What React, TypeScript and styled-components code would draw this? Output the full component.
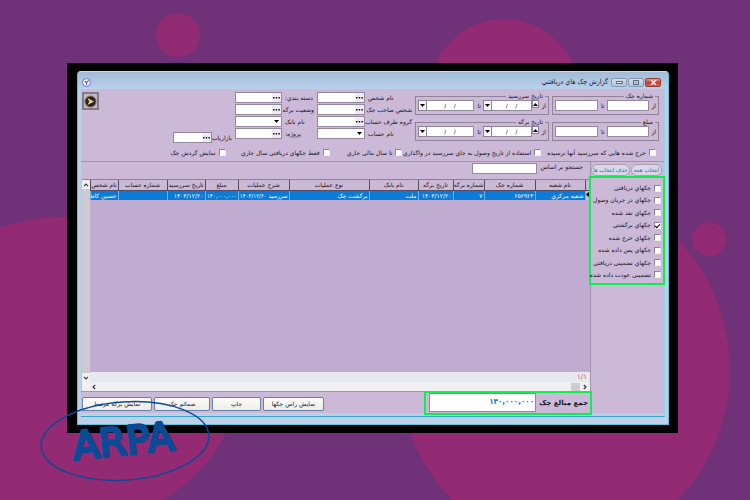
import React, { useId } from "react";
import styled, { createGlobalStyle } from "styled-components";

const Global = createGlobalStyle`
  *, *::before, *::after { box-sizing: border-box; }
  html, body { margin: 0; background: #6f3178; }
  body, button, input, select, table {
    font-family: "DejaVu Sans", "Noto Sans", sans-serif;
    font-size: 6px;
    line-height: 10px;
    color: #17121c;
  }
`;

const Page = styled.main`
  position: relative;
  display: flex;
  min-height: 100vh;
  padding: 63px 72px 67px 67px;
  overflow: hidden;
`;
const Backdrop = styled.svg`
  position: absolute;
  inset: 0;
  width: 100%;
  height: 100%;
`;
const Frame = styled.div`
  position: relative;
  display: flex;
  flex: 1;
  min-width: 0;
  padding: 8px 9px 8px 10px;
  background: #000;
`;
const Window = styled.section`
  display: flex;
  flex: 1;
  flex-direction: column;
  min-width: 0;
  border: 1px solid #5fc3dc;
  border-top-color: #c5dcea;
  border-radius: 4px 4px 0 0;
  background: #bdd0e8;
`;
const TitleBar = styled.header`
  display: flex;
  align-items: center;
  height: 17px;
  padding: 3px 7px 0 4px;
  background: linear-gradient(#a3bcd6, #b9d1ec);
  border-radius: 4px 4px 0 0;
`;
const TitleText = styled.h1`
  flex: 1;
  margin: 0 2px;
  font-family: "DejaVu Sans Condensed", "DejaVu Sans", sans-serif;
  font-size: 7px;
  font-weight: 400;
  line-height: 12px;
`;
const Caption = styled.button<{ $close?: boolean }>`
  display: grid;
  place-items: center;
  width: 16px;
  height: 9px;
  margin-left: 1px;
  padding: 0;
  color: ${(p) => (p.$close ? "#fff" : "#51647c")};
  background: ${(p) => (p.$close ? "linear-gradient(#e39a8c, #c6402f 50%, #d8634a)" : "linear-gradient(#d3e0ee, #b1c6de)")};
  border: 1px solid ${(p) => (p.$close ? "#9a3b34" : "#8799b0")};
  border-radius: 2px;
`;
const Inner = styled.div`
  display: flex;
  flex: 1;
  flex-direction: column;
  min-width: 0;
  margin: 0 3px 7px;
  padding-bottom: 3px;
  border-bottom: 1px solid #3aa5c6;
  border-right: 1px solid #8fd8e8;
`;
const Client = styled.div`
  display: flex;
  flex: 1;
  flex-direction: column;
  min-width: 0;
  background: #ccb9d8;
`;
const Filters = styled.div`
  display: grid;
  grid-template-columns: 107fr 134fr 95fr 79fr 59fr 88fr;
  gap: 3px;
  padding: 1px 5px 0 1px;
  height: 56px;
  & > * { min-width: 0; }
`;
const Stack = styled.div<{ $gap: number; $end?: boolean }>`
  display: flex;
  flex-direction: column;
  gap: ${(p) => p.$gap}px;
  justify-content: ${(p) => (p.$end ? "flex-end" : "flex-start")};
  padding: 2px 0;
`;
const Group = styled.fieldset`
  display: flex;
  align-items: center;
  gap: 2px;
  height: 23px;
  min-width: 0;
  margin: 0;
  padding: 0 2px 1px;
  border: 1px solid #8f8398;
`;
const Legend = styled.legend`
  margin-right: 1px;
  padding: 0 2px;
  line-height: 8px;
`;
const RangeLabel = styled.label`
  flex: none;
  width: 5px;
`;
const TextBox = styled.input`
  flex: 1;
  min-width: 0;
  width: 100%;
  height: 11px;
  padding: 0 2px;
  background: #fff;
  border: 1px solid #94899c;
  outline: 0;
`;
const DateBox = styled(TextBox)`
  text-align: center;
  border-left: 0;
  white-space: pre;
`;
const MiniButton = styled.button`
  display: grid;
  flex: none;
  place-items: center;
  width: 9px;
  height: 11px;
  padding: 0;
  color: #000;
  background: #f6f4f7;
  border: 1px solid #8c8295;
`;
const SpinButton = styled(MiniButton)`
  width: 7px;
  height: 8px;
`;
const DateField = styled.div`
  display: flex;
  flex: 1;
  min-width: 0;
`;
const FieldRow = styled.div<{ $label: number }>`
  display: grid;
  grid-template-columns: ${(p) => p.$label}px minmax(0, 1fr);
  gap: 3px;
  align-items: center;
  height: 11px;
  white-space: nowrap;
`;
const FieldLabel = styled.label`
  text-align: left;
`;
const Combo = styled.div`
  position: relative;
  display: flex;
  height: 11px;
  background: #fff;
  border: 1px solid #94899c;
`;
const ComboInput = styled.input`
  flex: 1;
  min-width: 0;
  height: 9px;
  padding: 0 2px;
  border: 0;
  outline: 0;
`;
const Ellipsis = styled.button`
  display: grid;
  flex: none;
  place-items: center;
  width: 9px;
  height: 9px;
  padding: 0;
  border: 0;
  background: #efecf1;
`;
const ComboSelect = styled.select`
  width: 100%;
  height: 9px;
  padding: 0;
  border: 0;
  background: transparent;
  appearance: none;
`;
const SelectArrow = styled.svg`
  position: absolute;
  top: 3px;
  right: 2px;
  pointer-events: none;
`;
const RunButton = styled.button`
  display: grid;
  place-items: center;
  width: 17px;
  height: 18px;
  margin: 2px auto 0 0;
  padding: 0;
  background: #c4b9c6;
  border: 2px solid #827b88;
`;
const Toggles = styled.div`
  display: grid;
  grid-template-columns: 115fr 139fr 73fr 104fr 145fr;
  align-items: center;
  height: 17px;
  padding: 0 8px 1px 0;
  border-bottom: 1px solid #a094aa;
`;
const CheckLabel = styled.label`
  display: flex;
  align-items: center;
  gap: 3px;
  min-width: 0;
  white-space: nowrap;
`;
const CheckBox = styled.input`
  flex: none;
  display: grid;
  place-items: center;
  width: 7px;
  height: 7px;
  margin: 0;
  appearance: none;
  background: #fff;
  border: 1px solid #8d8396;
  border-right-color: #eee;
  border-bottom-color: #eee;
  &:checked::after {
    content: "";
    width: 5px;
    height: 3px;
    border-left: 1px solid #000;
    border-bottom: 1px solid #000;
    transform: rotate(-45deg);
  }
`;
const Workspace = styled.div`
  display: flex;
  flex: 1;
  min-height: 0;
`;
const Sidebar = styled.aside`
  width: 74px;
  flex: none;
  padding-top: 2px;
  border-left: 1px solid #a094aa;
`;
const PillRow = styled.div`
  display: flex;
  gap: 1px;
  padding-right: 2px;
`;
const Pill = styled.button<{ $grow: number }>`
  flex: ${(p) => p.$grow} 1 0;
  min-width: 0;
  height: 12px;
  padding: 0;
  color: #1478c8;
  font-family: "DejaVu Sans Condensed", "DejaVu Sans", sans-serif;
  white-space: nowrap;
  background: #ddd6e4;
  border: 1px solid #a79fae;
  border-radius: 6px;
`;
const StatusList = styled.div`
  position: relative;
  display: flex;
  flex-direction: column;
  justify-content: space-between;
  height: 109px;
  margin: 0 -1px 0 -2px;
  padding: 5px 2px 3px 0;
  border: 2px solid #0cf04f;
`;
const Results = styled.div`
  display: flex;
  flex: 1;
  flex-direction: column;
  min-width: 0;
`;
const SearchBar = styled.div`
  display: flex;
  gap: 4px;
  height: 17px;
  padding: 0 7px 0 0;
`;
const SearchLabel = styled.label`
  width: 42px;
  white-space: nowrap;
`;
const SearchInput = styled(TextBox)`
  flex: none;
  width: 65px;
  margin-top: 1px;
`;
const GridArea = styled.div`
  display: flex;
  flex: 1;
  min-height: 0;
  margin-left: 1px;
  border-top: 1px solid #8d8396;
`;
const GridBody = styled.div`
  display: flex;
  flex: 1;
  flex-direction: column;
  min-width: 0;
  background: #c0acd0;
`;
const Grid = styled.table`
  width: 100%;
  table-layout: fixed;
  border-collapse: collapse;
`;
const Th = styled.th`
  height: 10px;
  padding: 0;
  overflow: hidden;
  font-weight: 400;
  line-height: 9px;
  white-space: nowrap;
  background: #cbb9d6;
  border-left: 1px solid #55495f;
  border-bottom: 1px solid #55495f;
`;
const Td = styled.td<{ $condensed?: boolean }>`
  height: 10px;
  padding: 0 1px;
  overflow: hidden;
  color: #fff;
  font-family: ${(p) => (p.$condensed ? '"DejaVu Sans Condensed", ' : "")}"DejaVu Sans", sans-serif;
  line-height: 9px;
  text-align: right;
  white-space: nowrap;
  background: #0a7bd7;
  border-left: 1px solid #6fb3e6;
`;
const RowMark = styled(Td)`
  padding: 0;
  background: #cbb9d6;
`;
const Counter = styled.div`
  height: 10px;
  margin-top: auto;
  padding: 0 3px;
  color: #e0455c;
  font-size: 7px;
  background: #e6e8f2;
`;
const VScroll = styled.div`
  display: flex;
  flex-direction: column;
  justify-content: space-between;
  width: 8px;
  background: #cdcbd0;
`;
const HScroll = styled.div`
  display: flex;
  align-items: center;
  gap: 1px;
  height: 9px;
  margin-left: 1px;
  padding: 0 1px 0 8px;
  background: #f0f0f2;
`;
const ScrollButton = styled.button`
  display: grid;
  place-items: center;
  width: 8px;
  height: 9px;
  padding: 0;
  background: #f0f0f2;
  border: 0;
`;
const Thumb = styled.div`
  width: 9px;
  height: 8px;
  margin-left: auto;
  background: #cdcdcd;
`;
const Footer = styled.footer`
  display: flex;
  align-items: center;
  justify-content: space-between;
  height: 22px;
  border-top: 1px solid #a094aa;
  padding-left: 1px;
`;
const Total = styled.div`
  display: flex;
  align-items: center;
  gap: 3px;
  width: 168px;
  height: 24px;
  margin: 0 -2px 0 0;
  padding: 0 2px 0 3px;
  border: 2px solid #0cf04f;
`;
const TotalLabel = styled.label`
  flex: none;
  font-size: 7px;
  font-weight: 700;
  white-space: nowrap;
`;
const TotalInput = styled(TextBox)`
  height: 19px;
  padding: 0 1px 3px;
  color: #0f7fbd;
  font-family: "DejaVu Sans Condensed", "DejaVu Sans", sans-serif;
  font-size: 8px;
  font-weight: 700;
  text-align: right;
`;
const Actions = styled.div`
  display: flex;
  gap: 2px;
  padding-top: 3px;
`;
const Action = styled.button<{ $width: number }>`
  width: ${(p) => p.$width}px;
  height: 14px;
  padding: 0;
  white-space: nowrap;
  background: linear-gradient(#fdfdfb, #ecebe6);
  border: 1px solid #6682a8;
  border-radius: 2px;
`;
const Logo = styled.svg`
  position: absolute;
  left: 39px;
  bottom: 16px;
  width: 172px;
  height: 84px;
`;

const Triangle = ({ up }: { up?: boolean }) => (
  <svg width="5" height="3" viewBox="0 0 5 3" aria-hidden="true">
    <path d={up ? "M0 3 2.5 0 5 3z" : "M0 0h5L2.5 3z"} fill="#000" />
  </svg>
);

const Chevron = ({ turn }: { turn: number }) => (
  <svg width="6" height="6" viewBox="0 0 6 6" aria-hidden="true">
    <path d="M1 4.2 3 2l2 2.2" fill="none" stroke="#333" strokeWidth="1.1" transform={`rotate(${turn} 3 3)`} />
  </svg>
);

const Dots = () => (
  <svg width="7" height="2" viewBox="0 0 7 2" aria-hidden="true">
    <path d="M0 0h1.5v1.5H0zM2.7 0h1.5v1.5H2.7zM5.4 0h1.5v1.5H5.4z" fill="#111" />
  </svg>
);

function NumberRange({ title }: { title: string }) {
  const id = useId();
  return (
    <Group>
      <Legend>{title}</Legend>
      <RangeLabel htmlFor={id + "a"}>از</RangeLabel>
      <TextBox id={id + "a"} />
      <RangeLabel htmlFor={id + "b"}>تا</RangeLabel>
      <TextBox id={id + "b"} />
    </Group>
  );
}

function DateRange({ title }: { title: string }) {
  const id = useId();
  return (
    <Group>
      <Legend>{title}</Legend>
      <RangeLabel htmlFor={id + "a"}>از</RangeLabel>
      <DateField>
        <SpinButton aria-label="افزایش"><Triangle up /></SpinButton>
        <DateBox id={id + "a"} defaultValue="/    /" />
        <MiniButton aria-label="تقویم"><Triangle /></MiniButton>
      </DateField>
      <RangeLabel htmlFor={id + "b"}>تا</RangeLabel>
      <DateField>
        <DateBox id={id + "b"} defaultValue="/    /" />
        <MiniButton aria-label="تقویم"><Triangle /></MiniButton>
      </DateField>
    </Group>
  );
}

function Field({ label, labelWidth, select }: { label: string; labelWidth: number; select?: boolean }) {
  const id = useId();
  return (
    <FieldRow $label={labelWidth}>
      <FieldLabel htmlFor={id}>{label}</FieldLabel>
      <Combo>
        {select ? (
          <>
            <ComboSelect id={id}><option value="" /></ComboSelect>
            <SelectArrow width="5" height="3" viewBox="0 0 5 3" aria-hidden="true">
              <path d="M0 0h5L2.5 3z" />
            </SelectArrow>
          </>
        ) : (
          <>
            <Ellipsis aria-label={"انتخاب " + label}><Dots /></Ellipsis>
            <ComboInput id={id} />
          </>
        )}
      </Combo>
    </FieldRow>
  );
}

function Check({ label, checked }: { label: string; checked?: boolean }) {
  return (
    <CheckLabel>
      <CheckBox type="checkbox" defaultChecked={checked} />
      {label}
    </CheckLabel>
  );
}

const toggles = [
  "خرج شده هایی که سررسید آنها نرسیده",
  "استفاده از تاریخ وصول به جاي سررسید در واگذاري",
  "تا سال مالی جاري",
  "فقط چکهاي دریافتی سال جاري",
  "نمایش گردش چک",
];

const statuses = [
  "چکهاي دریافتی",
  "چکهاي در جریان وصول",
  "چکهاي نقد شده",
  "چکهاي برگشتی",
  "چکهاي خرج شده",
  "چکهاي پس داده شده",
  "چکهاي تضمینی دریافتی",
  "تضمینی عودت داده شده",
];

const columns = [
  { title: "نام شعبه", width: 50, value: "شعبه مرکزي" },
  { title: "شماره چک", width: 51, value: "۶۵۶۹۲۳" },
  { title: "شماره برگه", width: 31, value: "۷" },
  { title: "تاریخ برگه", width: 35, value: "۱۴۰۳/۱۲/۲۰" },
  { title: "نام بانک", width: 49, value: "ملت" },
  { title: "نوع عملیات", width: 80, value: "برگشت چک" },
  { title: "شرح عملیات", width: 51, value: "سررسید ۱۴۰۳/۱۲/۲۰", condensed: true },
  { title: "مبلغ", width: 33, value: "۱۴۰,۰۰۰,۰۰۰", condensed: true },
  { title: "تاریخ سررسید", width: 38, value: "۱۴۰۳/۱۲/۲۰" },
  { title: "شماره حساب", width: 49, value: "" },
  { title: "نام شخص", width: 28, value: "حسین کاظمی" },
];

const actions = [
  { label: "نمایش راس چکها", width: 61 },
  { label: "چاپ", width: 49 },
  { label: "ضمائم چک", width: 56 },
  { label: "نمایش برگه مرتبط", width: 70 },
];

export default function App() {
  return (
    <Page dir="rtl">
      <Global />
      <Backdrop viewBox="0 0 750 500" preserveAspectRatio="xMidYMid slice" aria-hidden="true">
        <g fill="#932a74">
          <circle cx="178" cy="35" r="22" />
          <circle cx="504" cy="94" r="75" />
          <ellipse cx="64" cy="372" rx="176" ry="155" />
          <ellipse cx="565" cy="370" rx="165" ry="178" />
          <circle cx="709" cy="239" r="17" />
        </g>
      </Backdrop>
      <Frame>
        <Window>
          <TitleBar>
            <Caption $close aria-label="بستن">
              <svg width="7" height="5" viewBox="0 0 7 5"><path d="m1 0 5 5M6 0 1 5" stroke="currentColor" strokeWidth="1.4" /></svg>
            </Caption>
            <Caption aria-label="بزرگ">
              <svg width="6" height="5" viewBox="0 0 6 5"><path d="M.5.5h5v4h-5zM2.500 2.500h1" fill="none" stroke="currentColor" /></svg>
            </Caption>
            <Caption aria-label="کوچک">
              <svg width="7" height="3" viewBox="0 0 7 3"><path d="M.5.5h6v2h-6z" fill="#fff" stroke="currentColor" /></svg>
            </Caption>
            <TitleText>گزارش چک هاي دریافتني</TitleText>
            <svg width="9" height="9" viewBox="0 0 10 10" aria-hidden="true">
              <circle cx="5" cy="5" r="4.400" fill="#f5f7ff" stroke="#5366d8" />
              <path d="M3 3.500 5 5l2.500-2M5 5v2.500" fill="none" stroke="#4052c8" strokeWidth="1.200" />
            </svg>
          </TitleBar>
          <Inner>
            <Client>
              <Filters>
                <Stack $gap={3}>
                  <NumberRange title="شماره چک" />
                  <NumberRange title="مبلغ" />
                </Stack>
                <Stack $gap={3}>
                  <DateRange title="تاریخ سررسید" />
                  <DateRange title="تاریخ برگه" />
                </Stack>
                <Stack $gap={1}>
                  <Field label="نام شخص" labelWidth={44} />
                  <Field label="شخص صاحب چک" labelWidth={44} />
                  <Field label="گروه طرف حساب:" labelWidth={44} />
                  <Field label="نام حساب" labelWidth={44} select />
                </Stack>
                <Stack $gap={1}>
                  <Field label="دسته بندي:" labelWidth={29} />
                  <Field label="وضعیت برگه" labelWidth={29} />
                  <Field label="نام بانک" labelWidth={29} select />
                  <Field label="پروژه:" labelWidth={29} />
                </Stack>
                <Stack $gap={1} $end>
                  <Field label="بازاریاب" labelWidth={17} />
                </Stack>
                <RunButton aria-label="اجرا">
                  <svg width="13" height="13" viewBox="0 0 13 13" aria-hidden="true">
                    <circle cx="6.500" cy="6.500" r="5.500" fill="#17204e" stroke="#8f6c35" />
                    <path d="m3.500 3 6.500 3.500L3.500 10l1.700-3.500z" fill="#ffd91e" />
                  </svg>
                </RunButton>
              </Filters>
              <Toggles>
                {toggles.map((t) => <Check key={t} label={t} />)}
              </Toggles>
              <Workspace>
                <Sidebar>
                  <PillRow>
                    <Pill $grow={31}>انتخاب همه</Pill>
                    <Pill $grow={39}>حذف انتخاب ها</Pill>
                  </PillRow>
                  <StatusList>
                    {statuses.map((s) => <Check key={s} label={s} checked={s === "چکهاي برگشتی"} />)}
                  </StatusList>
                </Sidebar>
                <Results>
                  <SearchBar>
                    <SearchLabel htmlFor="search">جستجو بر اساس</SearchLabel>
                    <SearchInput id="search" />
                  </SearchBar>
                  <GridArea>
                    <GridBody>
                      <Grid>
                        <colgroup>
                          <col width="5" />
                          {columns.map((c) => <col key={c.title} width={c.width} />)}
                        </colgroup>
                        <thead>
                          <tr>
                            <Th />
                            {columns.map((c) => <Th key={c.title}>{c.title}</Th>)}
                          </tr>
                        </thead>
                        <tbody>
                          <tr>
                            <RowMark>
                              <svg width="4" height="7" viewBox="0 0 4 7" aria-hidden="true"><path d="M4 0v7L0 3.500z" /></svg>
                            </RowMark>
                            {columns.map((c) => <Td key={c.title} $condensed={c.condensed}>{c.value}</Td>)}
                          </tr>
                        </tbody>
                      </Grid>
                      <Counter>۱/۱</Counter>
                    </GridBody>
                    <VScroll>
                      <ScrollButton aria-label="بالا"><Chevron turn={0} /></ScrollButton>
                      <ScrollButton aria-label="پایین"><Chevron turn={180} /></ScrollButton>
                    </VScroll>
                  </GridArea>
                  <HScroll>
                    <ScrollButton aria-label="راست"><Chevron turn={90} /></ScrollButton>
                    <Thumb />
                    <ScrollButton aria-label="چپ"><Chevron turn={270} /></ScrollButton>
                  </HScroll>
                  <Footer>
                    <Total>
                      <TotalLabel htmlFor="total">جمع مبالغ چک</TotalLabel>
                      <TotalInput id="total" defaultValue="۱۴۰,۰۰۰,۰۰۰" />
                    </Total>
                    <Actions>
                      {actions.map((a) => <Action key={a.label} $width={a.width}>{a.label}</Action>)}
                    </Actions>
                  </Footer>
                </Results>
              </Workspace>
            </Client>
          </Inner>
        </Window>
      </Frame>
      <Logo viewBox="0 0 172 84" direction="ltr" role="img" aria-label="ARPA">
        <ellipse cx="86" cy="41" rx="84" ry="39" fill="none" stroke="#0b4a94" strokeWidth="1.500" transform="rotate(-4 86 41)" />
        <text
          x="35"
          y="60"
          fill="#0b4a94"
          stroke="#0b4a94"
          strokeWidth="3"
          strokeLinejoin="round"
          fontFamily="DejaVu Sans, sans-serif"
          fontSize="39"
          transform="rotate(-6 35 60)"
        >
          ARPA
        </text>
      </Logo>
    </Page>
  );
}
